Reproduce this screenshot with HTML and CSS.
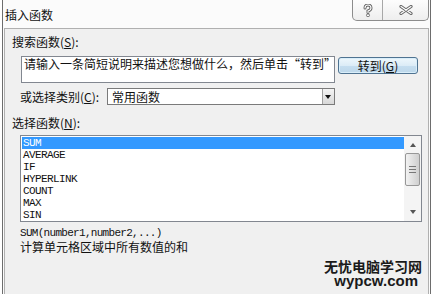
FILE: index.html
```html
<!DOCTYPE html>
<html lang="zh-CN">
<head>
  <meta charset="UTF-8">
  <title>插入函数</title>
  <link rel="stylesheet" href="styles.css">
</head>
<body>

  <div class="window">
    <!-- 标题栏 -->
    <div class="titlebar">
      <span class="title">插入函数</span>
      <div class="caption">
        <div class="cap-btn help">
          <svg width="10" height="13" viewBox="0 0 10 13">
            <path d="M2 4 Q2 1 5 1 Q8 1 8 4 Q8 6 5 7 L5 8.5" fill="none" stroke="#666" stroke-width="3" stroke-linecap="round"/>
            <path d="M2 4 Q2 1 5 1 Q8 1 8 4 Q8 6 5 7 L5 8.5" fill="none" stroke="#fff" stroke-width="1.1" stroke-linecap="round"/>
            <circle cx="5" cy="11.3" r="1.5" fill="#fff" stroke="#666" stroke-width="0.9"/>
          </svg>
        </div>
        <div class="cap-btn close">
          <svg width="14" height="10" viewBox="0 0 14 10">
            <path d="M2 1.5 L12 8.5 M12 1.5 L2 8.5" fill="none" stroke="#666" stroke-width="3.2" stroke-linecap="round"/>
            <path d="M2 1.5 L12 8.5 M12 1.5 L2 8.5" fill="none" stroke="#fff" stroke-width="1.2" stroke-linecap="round"/>
          </svg>
        </div>
      </div>
    </div>

    <!-- 内容 -->
    <div class="panel">
      <div class="label">搜索函数(<u>S</u>):</div>
      <div class="search-row">
        <div class="search-box">请输入一条简短说明来描述您想做什么，然后单击“转到”</div>
        <button class="go-btn">转到(<u>G</u>)</button>
      </div>

      <div class="cat-row">
        <span class="cat-label">或选择类别(<u>C</u>):</span>
        <div class="combo">
          <span class="combo-text">常用函数</span>
          <span class="combo-arrow"></span>
        </div>
      </div>

      <div class="label label-list">选择函数(<u>N</u>):</div>
      <div class="listbox">
        <ul class="items">
          <li class="selected">SUM</li>
          <li>AVERAGE</li>
          <li>IF</li>
          <li>HYPERLINK</li>
          <li>COUNT</li>
          <li>MAX</li>
          <li>SIN</li>
        </ul>
        <div class="scrollbar">
          <div class="sb-btn"><span class="tri-up"></span></div>
          <div class="sb-thumb"><span class="grip"></span></div>
          <div class="sb-btn"><span class="tri-down"></span></div>
        </div>
      </div>

      <div class="syntax">SUM(number1,number2,...)</div>
      <div class="desc">计算单元格区域中所有数值的和</div>

      <div class="mark">
        <div class="mark-cn">无忧电脑学习网</div>
        <div class="mark-en">wypcw.com</div>
      </div>
    </div>
  </div>

</body>
</html>
```

FILE: styles.css
```css
body {
  margin: 0;
  background-color: #fff;
  font-family: "Noto Sans CJK SC", "Liberation Sans", sans-serif;
  font-size: 12px;
  color: #111;
}
u {
  text-decoration: underline;
}
.window {
  margin-left: 2px;
  width: 427px;
  height: 294px;
  border-left: 1px solid #6d6d6d;
  border-right: 1px solid #6d6d6d;
  background-color: #fbfbfb;
  display: flex;
  flex-direction: column;
}
.titlebar {
  height: 28px;
  display: flex;
  justify-content: space-between;
  align-items: flex-start;
}
.title {
  margin: 7px 0 0 2px;
  line-height: 16px;
  font-size: 12px;
}
.caption {
  display: flex;
  height: 20px;
  margin-right: 1px;
  border: 1px solid #8c8c8c;
  border-top: none;
  border-radius: 0 0 5px 5px;
  background: linear-gradient(#fdfdfd, #eeeeee);
}
.cap-btn {
  display: flex;
  align-items: center;
  justify-content: center;
}
.help {
  width: 29px;
  border-right: 1px solid #a8a8a8;
}
.close {
  width: 45px;
}
.panel {
  flex: 1;
  margin: 0 1px;
  border: 1px solid #b0b0b0;
  border-bottom: none;
  background-color: #f0f0f0;
  padding: 6px 0 0 7px;
}
.label {
  line-height: 14px;
}
.search-row {
  display: flex;
  align-items: flex-start;
  margin: 7px 0 0 9px;
}
.search-box {
  width: 308px;
  height: 25px;
  padding: 0 2px;
  border: 1px solid #828790;
  background-color: #fff;
  line-height: 14px;
}
.go-btn {
  margin: 1px 0 0 3px;
  width: 80px;
  height: 17px;
  padding: 0;
  border: 1px solid #4f7391;
  border-radius: 3px;
  background: linear-gradient(#eef7fc, #dcecf7 50%, #c6def0 51%, #bcd7ea);
  box-shadow: inset 0 0 0 1px #d9eefa;
  font-family: inherit;
  font-size: 12px;
  line-height: 13px;
  color: #111;
}
.cat-row {
  display: flex;
  align-items: center;
  margin: 5px 0 0 8px;
}
.cat-label {
  width: 87px;
  line-height: 14px;
}
.combo {
  width: 226px;
  height: 15px;
  border: 1px solid #7a7a7a;
  background-color: #fff;
  display: flex;
  align-items: center;
  justify-content: space-between;
}
.combo-text {
  padding-left: 4px;
  line-height: 14px;
}
.combo-arrow {
  width: 11px;
  height: 15px;
  border-left: 1px solid #a0a0a0;
  background: linear-gradient(#f4f4f4, #d8d8d8);
  position: relative;
}
.combo-arrow::after {
  content: "";
  position: absolute;
  left: 2px;
  top: 6px;
  border-left: 3.5px solid transparent;
  border-right: 3.5px solid transparent;
  border-top: 4px solid #111;
}
.label-list {
  margin-top: 11px;
}
.listbox {
  margin: 5px 0 0 8px;
  width: 400px;
  height: 85px;
  border: 1px solid #828790;
  background-color: #fff;
  display: flex;
}
.items {
  flex: 1;
  list-style: none;
  margin: 0;
  padding: 1px 0 0 1px;
  font-family: "Liberation Mono", monospace;
  font-size: 11px;
  letter-spacing: -0.6px;
  line-height: 12px;
}
.items li {
  padding-left: 1px;
  height: 12px;
}
.items .selected {
  background-color: #3399ff;
  color: #fff;
}
.scrollbar {
  width: 17px;
  display: flex;
  flex-direction: column;
  justify-content: space-between;
  background-color: #f4f4f4;
  padding: 1px 0;
}
.sb-btn {
  height: 16px;
  display: flex;
  align-items: center;
  justify-content: center;
}
.tri-up {
  border-left: 3.5px solid transparent;
  border-right: 3.5px solid transparent;
  border-bottom: 4px solid #555;
}
.tri-down {
  border-left: 3.5px solid transparent;
  border-right: 3.5px solid transparent;
  border-top: 4px solid #555;
}
.sb-thumb {
  height: 31px;
  margin: 0 1px auto 1px;
  border: 1px solid #979797;
  border-radius: 2px;
  background: linear-gradient(to right, #f2f2f2, #e0e0e0 50%, #cfcfcf);
  display: flex;
  align-items: center;
  justify-content: center;
}
.grip {
  width: 7px;
  height: 5px;
  border-top: 1px solid #777;
  border-bottom: 1px solid #777;
  background: linear-gradient(#fff0 40%, #777 40%, #777 60%, #fff0 60%);
}
.syntax {
  margin: 5px 0 0 8px;
  font-family: "Liberation Mono", monospace;
  font-size: 11px;
  letter-spacing: -0.7px;
  line-height: 12px;
}
.desc {
  margin: 1px 0 0 8px;
  line-height: 14px;
  font-size: 12px;
}
.mark {
  margin-top: 5px;
  padding-right: 6px;
  text-align: right;
  font-weight: bold;
  color: #1a1a1a;
}
.mark-cn {
  font-size: 14px;
  line-height: 14px;
}
.mark-en {
  font-family: "Liberation Sans", sans-serif;
  font-size: 15px;
  line-height: 15px;
  padding-right: 4px;
}
```
